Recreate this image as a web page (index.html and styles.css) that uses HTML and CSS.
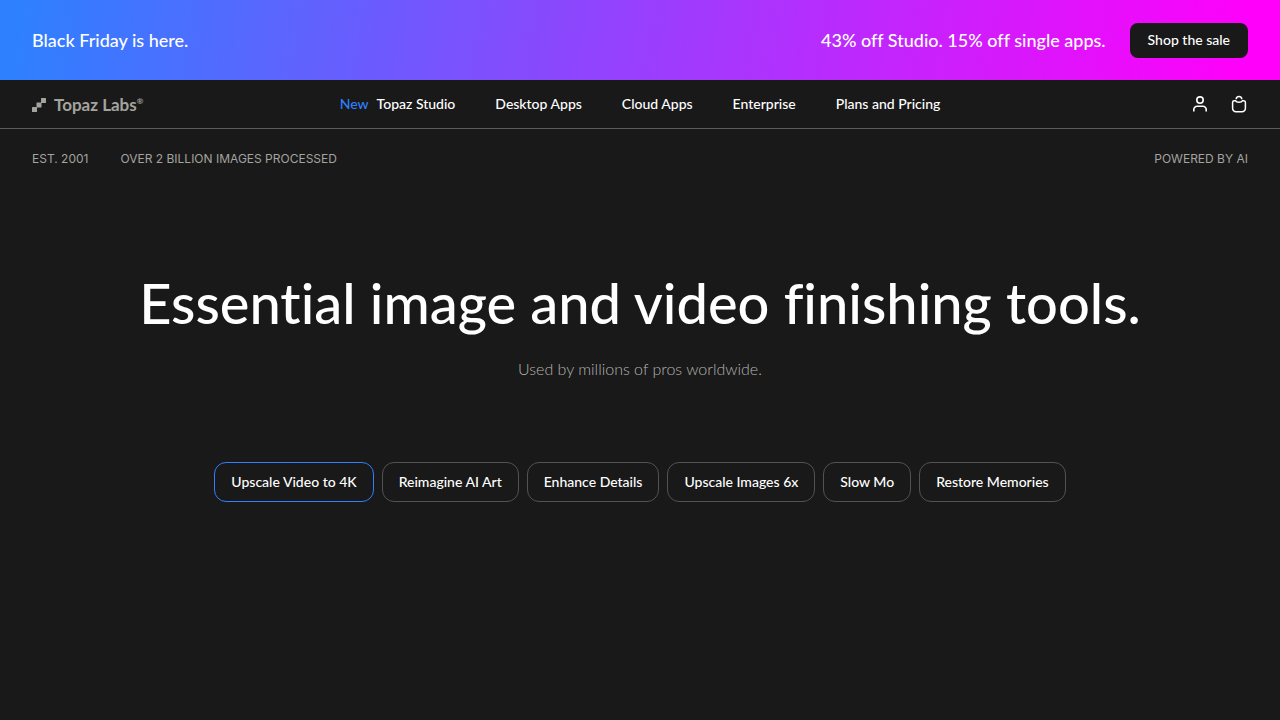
FILE: index.html
```html
<!DOCTYPE html>
<html lang="en">
<head>
    <meta charset="UTF-8">
    <meta name="viewport" content="width=device-width, initial-scale=1.0">
    <title>Topaz Labs</title>
    <link rel="stylesheet" href="styles.css">
</head>
<body>
    <div class="promo">
        <p>Black Friday is here.</p>
        <div class="promo-offer">
            <p>43% off Studio. 15% off single apps.</p>
            <a class="promo-button" href="#">Shop the sale</a>
        </div>
    </div>

    <header class="header">
        <a class="logo" href="#">
            <svg width="14" height="14" viewBox="0 0 14 14" fill="currentColor" aria-hidden="true">
                <rect x="0" y="9" width="5" height="5" rx="0.5"/>
                <rect x="4.5" y="4.5" width="5" height="5" rx="0.5"/>
                <rect x="9" y="0" width="5" height="5" rx="0.5"/>
            </svg>
            <span class="logo-name">Topaz Labs<sup>®</sup></span>
        </a>
        <nav class="nav">
            <a href="#"><span class="nav-new">New</span>Topaz Studio</a>
            <a href="#">Desktop Apps</a>
            <a href="#">Cloud Apps</a>
            <a href="#">Enterprise</a>
            <a href="#">Plans and Pricing</a>
        </nav>
        <div class="actions">
            <button type="button" aria-label="Account">
                <svg width="18" height="18" viewBox="0 0 18 18" fill="none" stroke="currentColor" stroke-width="1.6" aria-hidden="true">
                    <circle cx="9" cy="5.1" r="3.2"/>
                    <path d="M2.8 16.6V14.6A3.4 3.4 0 0 1 6.2 11.2H11.8A3.4 3.4 0 0 1 15.2 14.6V16.6"/>
                </svg>
            </button>
            <button type="button" aria-label="Cart">
                <svg width="18" height="18" viewBox="0 0 18 18" fill="none" stroke="currentColor" stroke-width="1.5" aria-hidden="true">
                    <path d="M4.2 5.7H5.4C5.9 6.7 7.2 7.3 9 7.3S12.1 6.7 12.6 5.7H13.8A1.6 1.6 0 0 1 15.4 7.3V13.2A3.4 3.4 0 0 1 12 16.7H6A3.4 3.4 0 0 1 2.6 13.2V7.3A1.6 1.6 0 0 1 4.2 5.7Z"/>
                    <path d="M6.2 4.3A2.8 2.8 0 0 1 11.8 4.3"/>
                </svg>
            </button>
        </div>
    </header>

    <main>
        <div class="facts">
            <span>EST. 2001</span>
            <span>OVER 2 BILLION IMAGES PROCESSED</span>
            <span class="facts-end">POWERED BY AI</span>
        </div>

        <section class="hero">
            <h1>Essential image and video finishing tools.</h1>
            <p>Used by millions of pros worldwide.</p>
            <div class="tabs">
                <button type="button" class="tab active">Upscale Video to 4K</button>
                <button type="button" class="tab">Reimagine AI Art</button>
                <button type="button" class="tab">Enhance Details</button>
                <button type="button" class="tab">Upscale Images 6x</button>
                <button type="button" class="tab">Slow Mo</button>
                <button type="button" class="tab">Restore Memories</button>
            </div>
        </section>
    </main>
</body>
</html>
```
FILE: styles.css
```css
* {
    box-sizing: border-box;
}

body {
    margin: 0;
    background-color: #191919;
    color: #fff;
    font-family: Lato, "Liberation Sans", sans-serif;
    font-size: 14px;
    font-weight: 500;
    line-height: 20px;
    font-variant-ligatures: none;
}

h1,
p {
    margin: 0;
}

a {
    color: inherit;
    text-decoration: none;
}

button {
    font: inherit;
    color: inherit;
    background: none;
    border: none;
    padding: 0;
    cursor: pointer;
}

svg {
    display: block;
}

.promo {
    display: flex;
    align-items: center;
    justify-content: space-between;
    min-height: 80px;
    padding: 0 32px;
    background: linear-gradient(100deg, #2f80ff 2%, #ff00fb 97%);
    font-size: 18px;
    line-height: 24px;
}

.promo-offer {
    display: flex;
    align-items: center;
    gap: 24px;
}

.promo-button {
    padding: 7px 18px 8px;
    border-radius: 8px;
    background-color: #191919;
    font-size: 14px;
    line-height: 20px;
}

.header {
    display: grid;
    grid-template-columns: 1fr auto 1fr;
    align-items: center;
    height: 49px;
    padding: 0 32px;
    border-bottom: 1px solid #5c5c5c;
}

.logo {
    display: flex;
    align-items: center;
    gap: 8px;
    padding-top: 2px;
    color: #a3a39f;
}

.logo-name {
    font-size: 17px;
    font-weight: 700;
}

.logo-name sup {
    font-size: 8px;
    line-height: 0;
    vertical-align: 7px;
}

.nav {
    display: flex;
    gap: 40px;
}

.nav-new {
    margin-right: 8px;
    color: #2f80ff;
}

.actions {
    display: flex;
    justify-content: flex-end;
    gap: 21px;
}

.facts {
    display: flex;
    gap: 32px;
    padding: 20px 32px;
    color: #a3a39f;
    font-family: Inter, "Liberation Sans", sans-serif;
    font-size: 12px;
    font-weight: 400;
}

.facts-end {
    margin-left: auto;
}

.hero {
    display: flex;
    flex-direction: column;
    align-items: center;
    padding: 80px 32px;
    text-align: center;
}

.hero h1 {
    font-size: 56px;
    font-weight: 500;
    line-height: 68px;
}

.hero p {
    margin-top: 16px;
    color: #b3b3af;
    font-size: 16px;
    font-weight: 300;
    line-height: 32px;
}

.tabs {
    display: flex;
    flex-wrap: wrap;
    justify-content: center;
    gap: 8px;
    margin-top: 77px;
}

.tab {
    height: 40px;
    padding: 0 16px;
    border: 1px solid #525252;
    border-radius: 12px;
}

.tab.active {
    border-color: #2f80ff;
}
```
